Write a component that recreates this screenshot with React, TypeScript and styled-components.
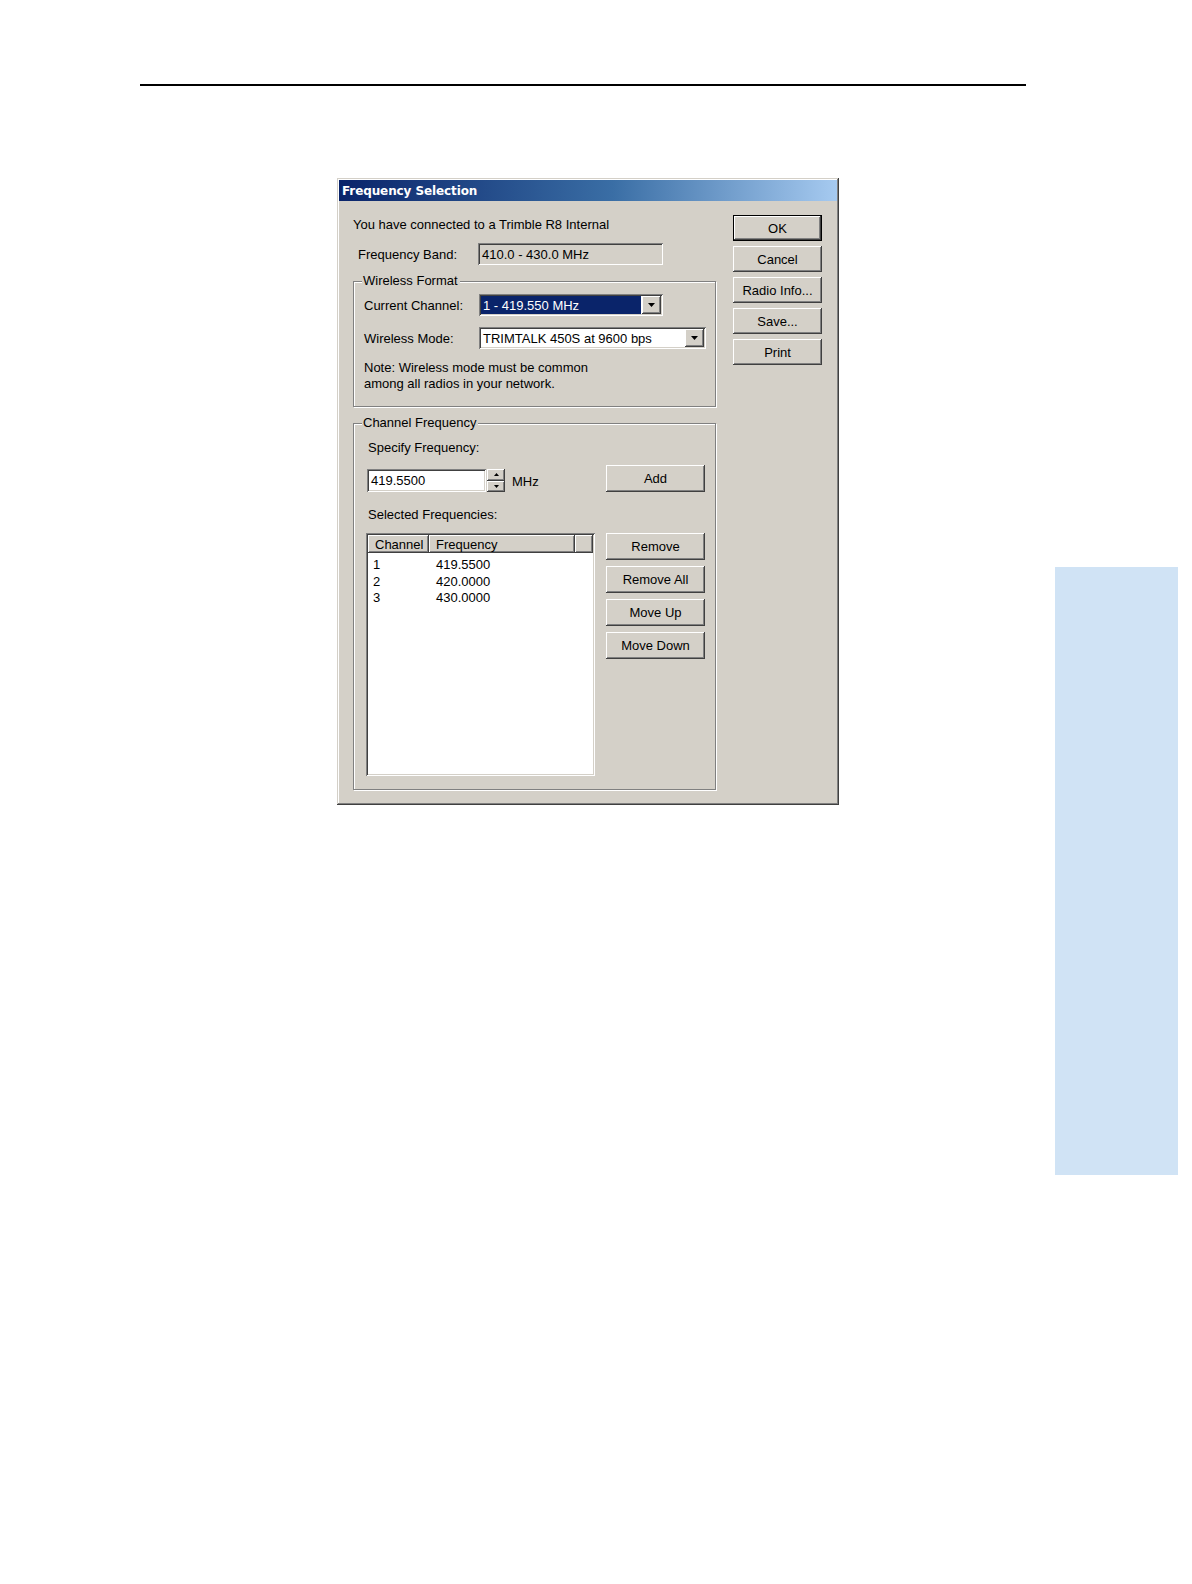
import React from "react";
import styled, { createGlobalStyle, css } from "styled-components";

const Global = createGlobalStyle`
  html, body { margin: 0; padding: 0; background: #ffffff; }
  body { font-family: "Liberation Sans", Arial, sans-serif; }
`;

const Page = styled.div`
  width: 100%;
  display: grid;
  grid-template-columns: 1055px 123px 1fr;
  background: #fff;
`;

const Main = styled.div`
  padding-top: 84px;
  display: flex;
  flex-direction: column;
`;

const Rule = styled.hr`
  margin: 0 0 0 140px;
  width: 886px;
  height: 2px;
  border: none;
  background: #000;
`;

const ThumbTab = styled.div`
  margin-top: 567px;
  height: 608px;
  background: #d0e3f5;
`;

const bevelRaised = css`
  box-shadow: inset -1px -1px 0 #404040, inset 1px 1px 0 #ffffff,
    inset -2px -2px 0 #808080, inset 2px 2px 0 #d4d0c8;
`;

const bevelSunken = css`
  box-shadow: inset 1px 1px 0 #808080, inset -1px -1px 0 #ffffff,
    inset 2px 2px 0 #404040, inset -2px -2px 0 #d4d0c8;
`;

const Dialog = styled.div`
  margin: 92px 0 0 337px;
  width: 502px;
  box-sizing: border-box;
  padding: 2px;
  background: #d4d0c8;
  box-shadow: inset -1px -1px 0 #404040, inset 1px 1px 0 #d4d0c8,
    inset -2px -2px 0 #808080, inset 2px 2px 0 #ffffff;
  font-family: "Liberation Sans", Arial, sans-serif;
  font-size: 13px;
  color: #000;
`;

const TitleBar = styled.div`
  height: 21px;
  display: flex;
  align-items: center;
  padding-left: 3px;
  background: linear-gradient(to right, #0a246a 0%, #3a6ea5 55%, #a6caf0 100%);
  color: #fff;
  font-family: "DejaVu Sans", Verdana, sans-serif;
  font-weight: bold;
  font-size: 12px;
  letter-spacing: -0.1px;
`;

const Body = styled.div`
  display: flex;
  padding: 14px 15px 13px 14px;
  gap: 17px;
`;

const LeftCol = styled.div`
  width: 363px;
  display: flex;
  flex-direction: column;
`;

const RightCol = styled.div`
  width: 89px;
  display: flex;
  flex-direction: column;
  gap: 5px;
`;

const Line = styled.div<{ $mt?: number; $pl?: number }>`
  line-height: 16px;
  height: 16px;
  margin-top: ${(p) => p.$mt ?? 0}px;
  padding-left: ${(p) => p.$pl ?? 0}px;
  white-space: nowrap;
`;

const Row = styled.div<{ $mt?: number; $pl?: number }>`
  display: flex;
  align-items: center;
  margin-top: ${(p) => p.$mt ?? 0}px;
  padding-left: ${(p) => p.$pl ?? 0}px;
`;

const Label = styled.div<{ $w: number }>`
  width: ${(p) => p.$w}px;
  white-space: nowrap;
`;

const ReadOnlyField = styled.div`
  width: 185px;
  height: 22px;
  box-sizing: border-box;
  padding: 0 4px;
  display: flex;
  align-items: center;
  background: #d4d0c8;
  ${bevelSunken};
`;

const Group = styled.div<{ $h: number; $mt: number; $pl: number }>`
  position: relative;
  margin-top: ${(p) => p.$mt}px;
  height: ${(p) => p.$h}px;
  box-sizing: border-box;
  border: 1px solid #808080;
  box-shadow: inset 1px 1px 0 #ffffff, 1px 1px 0 #ffffff;
  padding-left: ${(p) => p.$pl - 1}px;
  display: flex;
  flex-direction: column;
`;

const Legend = styled.div`
  position: absolute;
  top: -9px;
  left: 8px;
  padding: 0 2px 0 1px;
  line-height: 16px;
  background: #d4d0c8;
`;

const Combo = styled.div<{ $w: number }>`
  width: ${(p) => p.$w}px;
  height: 22px;
  box-sizing: border-box;
  padding: 2px;
  display: flex;
  background: #fff;
  ${bevelSunken};
`;

const ComboText = styled.div<{ $selected?: boolean }>`
  flex: 1;
  display: flex;
  align-items: center;
  padding-left: 2px;
  margin-right: 1px;
  white-space: nowrap;
  background: ${(p) => (p.$selected ? "#0a246a" : "#fff")};
  color: ${(p) => (p.$selected ? "#fff" : "#000")};
`;

const ArrowBtn = styled.div`
  width: 19px;
  display: flex;
  align-items: center;
  justify-content: center;
  background: #d4d0c8;
  ${bevelRaised};
`;

const Arrow = ({ up }: { up?: boolean }) => (
  <svg width="7" height="4" viewBox="0 0 7 4">
    <path d={up ? "M3.5 0L7 4H0Z" : "M0 0H7L3.5 4Z"} fill="#000" />
  </svg>
);

const SmallArrow = ({ up }: { up?: boolean }) => (
  <svg width="5" height="3" viewBox="0 0 5 3">
    <path d={up ? "M2.5 0L5 3H0Z" : "M0 0H5L2.5 3Z"} fill="#000" />
  </svg>
);

const InputRow = styled.div`
  display: flex;
  align-items: flex-end;
  margin-top: 9px;
  padding-right: 10px;
`;

const TextInput = styled.div`
  width: 119px;
  height: 23px;
  box-sizing: border-box;
  padding: 0 4px;
  display: flex;
  align-items: center;
  background: #fff;
  ${bevelSunken};
`;

const Spinner = styled.div`
  width: 18px;
  height: 23px;
  margin-left: 1px;
  display: flex;
  flex-direction: column;
`;

const SpinHalf = styled.div`
  flex: 1;
  display: flex;
  align-items: center;
  justify-content: center;
  background: #d4d0c8;
  ${bevelRaised};
`;

const Unit = styled.div`
  margin-left: 7px;
  height: 20px;
  line-height: 20px;
  flex: 1;
`;

const Button = styled.button<{ $w: number; $h: number; $default?: boolean }>`
  width: ${(p) => p.$w}px;
  height: ${(p) => p.$h}px;
  flex: none;
  margin: 0;
  padding: 0;
  border: ${(p) => (p.$default ? "1px solid #000" : "none")};
  box-sizing: border-box;
  background: #d4d0c8;
  font-family: "Liberation Sans", Arial, sans-serif;
  font-size: 13px;
  color: #000;
  ${bevelRaised};
`;

const ListRow = styled.div`
  display: flex;
  margin-top: 10px;
  margin-left: -1px;
  padding-right: 10px;
  justify-content: space-between;
`;

const ListBox = styled.div`
  width: 229px;
  height: 243px;
  box-sizing: border-box;
  padding: 2px;
  background: #fff;
  ${bevelSunken};
  display: flex;
  flex-direction: column;
`;

const Header = styled.div`
  display: flex;
  height: 18px;
`;

const HeadCell = styled.div<{ $w?: number }>`
  ${(p) => (p.$w ? `width: ${p.$w}px;` : "flex: 1;")}
  height: 18px;
  box-sizing: border-box;
  padding-left: 7px;
  display: flex;
  align-items: center;
  background: #d4d0c8;
  ${bevelRaised};
`;

const DataRows = styled.div`
  padding-top: 4px;
`;

const DataRow = styled.div`
  display: flex;
  height: 16.5px;
  line-height: 16.5px;
`;

const Cell = styled.div<{ $w: number }>`
  width: ${(p) => p.$w}px;
  padding-left: 5px;
  box-sizing: border-box;
`;

const SideButtons = styled.div`
  display: flex;
  flex-direction: column;
  gap: 6px;
`;

const rows = [
  ["1", "419.5500"],
  ["2", "420.0000"],
  ["3", "430.0000"],
];

export default function App() {
  return (
    <Page>
      <Global />
      <Main>
        <Rule />
        <Dialog>
          <TitleBar>Frequency Selection</TitleBar>
          <Body>
            <LeftCol>
              <Line $mt={2}>You have connected to a Trimble R8 Internal</Line>
              <Row $mt={10} $pl={5}>
                <Label $w={120}>Frequency Band:</Label>
                <ReadOnlyField>410.0 - 430.0 MHz</ReadOnlyField>
              </Row>
              <Group $h={126} $mt={16} $pl={11}>
                <Legend>Wireless Format</Legend>
                <Row $mt={12}>
                  <Label $w={115}>Current Channel:</Label>
                  <Combo $w={184}>
                    <ComboText $selected>1 - 419.550 MHz</ComboText>
                    <ArrowBtn>
                      <Arrow />
                    </ArrowBtn>
                  </Combo>
                </Row>
                <Row $mt={11}>
                  <Label $w={115}>Wireless Mode:</Label>
                  <Combo $w={227}>
                    <ComboText>TRIMTALK 450S at 9600 bps</ComboText>
                    <ArrowBtn>
                      <Arrow />
                    </ArrowBtn>
                  </Combo>
                </Row>
                <Line $mt={11}>Note: Wireless mode must be common</Line>
                <Line>among all radios in your network.</Line>
              </Group>
              <Group $h={367} $mt={16} $pl={14}>
                <Legend>Channel Frequency</Legend>
                <Line $mt={16} $pl={1}>Specify Frequency:</Line>
                <InputRow>
                  <TextInput>419.5500</TextInput>
                  <Spinner>
                    <SpinHalf>
                      <SmallArrow up />
                    </SpinHalf>
                    <SpinHalf>
                      <SmallArrow />
                    </SpinHalf>
                  </Spinner>
                  <Unit>MHz</Unit>
                  <Button $w={99} $h={27}>Add</Button>
                </InputRow>
                <Line $mt={15} $pl={1}>Selected Frequencies:</Line>
                <ListRow>
                  <ListBox>
                    <Header>
                      <HeadCell $w={61}>Channel</HeadCell>
                      <HeadCell $w={146}>Frequency</HeadCell>
                      <HeadCell />
                    </Header>
                    <DataRows>
                      {rows.map(([c, f]) => (
                        <DataRow key={c}>
                          <Cell $w={63}>{c}</Cell>
                          <Cell $w={140}>{f}</Cell>
                        </DataRow>
                      ))}
                    </DataRows>
                  </ListBox>
                  <SideButtons>
                    <Button $w={99} $h={27}>Remove</Button>
                    <Button $w={99} $h={27}>Remove All</Button>
                    <Button $w={99} $h={27}>Move Up</Button>
                    <Button $w={99} $h={27}>Move Down</Button>
                  </SideButtons>
                </ListRow>
              </Group>
            </LeftCol>
            <RightCol>
              <Button $w={89} $h={26} $default>OK</Button>
              <Button $w={89} $h={26}>Cancel</Button>
              <Button $w={89} $h={26}>Radio Info...</Button>
              <Button $w={89} $h={26}>Save...</Button>
              <Button $w={89} $h={26}>Print</Button>
            </RightCol>
          </Body>
        </Dialog>
      </Main>
      <ThumbTab />
    </Page>
  );
}
